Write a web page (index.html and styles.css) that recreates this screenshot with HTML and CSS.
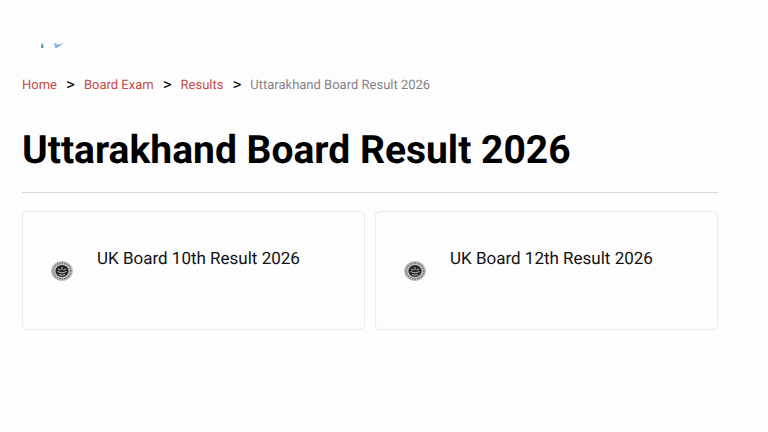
FILE: index.html
```html
<!DOCTYPE html>
<html lang="en">
<head>
    <meta charset="UTF-8">
    <meta name="viewport" content="width=device-width, initial-scale=1.0">
    <title>Uttarakhand Board Result 2026</title>
    <link rel="stylesheet" href="styles.css">
</head>
<body>
    <!-- Board emblem, shared by both cards -->
    <svg class="symbols" aria-hidden="true">
        <symbol id="emblem" viewBox="0 0 22 20">
            <ellipse cx="11" cy="10" rx="10.5" ry="9.5" fill="#c4c4c4" stroke="#999" stroke-width="0.6"/>
            <ellipse cx="11" cy="10" rx="8.7" ry="7.9" fill="none" stroke="#777" stroke-width="1.6" stroke-dasharray="1.5 0.9"/>
            <ellipse cx="11" cy="10" rx="6.6" ry="6" fill="#252525"/>
            <path d="M7 8l2.500 1M15 8l-2.500 1M11 6v3M6.500 10.500q4.500 3 9 0M8 13.500q3 1.500 6 0" fill="none" stroke="#ccc" stroke-width="0.9"/>
        </symbol>
    </svg>

    <main class="page">
        <svg class="logo" viewBox="0 0 48 8" aria-hidden="true">
            <path d="M19 1h2l1 2v3h-3z" fill="#a5d5e8"/>
            <path d="M19 3h2v3h-2z" fill="#4b9fbd"/>
            <path d="M32 1h2l1 2 7-2-4 3-3 2h-2z" fill="#8fc1e6"/>
            <path d="M34 4l3-1" stroke="#5a9fd0" fill="none"/>
        </svg>

        <nav class="breadcrumb" aria-label="Breadcrumb">
            <a href="#">Home</a>
            <span class="separator">&gt;</span>
            <a href="#">Board Exam</a>
            <span class="separator">&gt;</span>
            <a href="#">Results</a>
            <span class="separator">&gt;</span>
            <span class="current">Uttarakhand Board Result 2026</span>
        </nav>

        <h1>Uttarakhand Board Result 2026</h1>

        <div class="results">
            <a class="card" href="#">
                <svg class="emblem" aria-hidden="true"><use href="#emblem"/></svg>
                <span class="card-title">UK Board 10th Result 2026</span>
            </a>
            <a class="card" href="#">
                <svg class="emblem" aria-hidden="true"><use href="#emblem"/></svg>
                <span class="card-title">UK Board 12th Result 2026</span>
            </a>
        </div>
    </main>
</body>
</html>
```
FILE: styles.css
```css
* {
    box-sizing: border-box;
}

body {
    margin: 0;
    font-family: Roboto, Arial, sans-serif;
    background-color: #fefdfe;
    color: #000;
    text-rendering: geometricPrecision;
}

.symbols {
    position: absolute;
    width: 0;
    height: 0;
}

.page {
    padding: 42px 50px 40px 22px;
}

.logo {
    display: block;
    width: 48px;
    height: 8px;
}

.breadcrumb {
    display: flex;
    align-items: center;
    gap: 9px;
    margin-top: 26px;
    font-size: 13px;
    line-height: 20px;
}

.breadcrumb a {
    color: #c64a45;
    text-decoration: none;
}

.separator {
    padding-bottom: 2px;
    font-size: 17px;
    line-height: 18px;
}

.current {
    color: #858287;
}

h1 {
    margin: 26px 0 18px;
    padding-bottom: 14px;
    border-bottom: 1px solid #dcdadd;
    font-size: 39px;
    line-height: 56px;
    font-weight: 700;
}

.results {
    display: grid;
    grid-template-columns: 1fr 1fr;
    gap: 10px;
}

.card {
    display: flex;
    align-items: center;
    gap: 24px;
    min-height: 119px;
    padding: 24px 28px;
    border: 1px solid #ebe8ec;
    border-radius: 5px;
    color: #111;
    text-decoration: none;
}

.emblem {
    width: 22px;
    height: 20px;
}

.card-title {
    padding-bottom: 24px;
    font-size: 17px;
    line-height: 24px;
}
```
